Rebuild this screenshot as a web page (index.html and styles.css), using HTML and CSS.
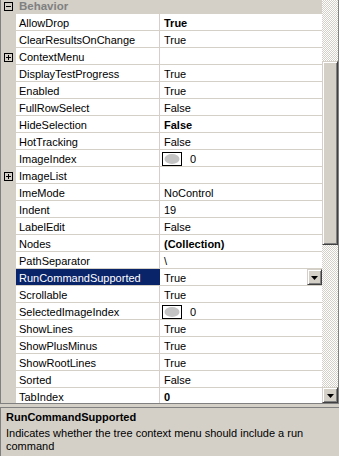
FILE: index.html
```html
<!DOCTYPE html>
<html>
<head>
<meta charset="utf-8">
<link rel="stylesheet" href="styles.css">
</head>
<body>
<div class="pg">
  <div class="grid">
    <div class="rows">
      <div class="cat">
        <div class="gut"><span class="pm"><svg width="9" height="9" viewBox="0 0 9 9"><rect x="0.5" y="0.5" width="8" height="8" fill="none" stroke="#000"/><path d="M2 4.5h5" stroke="#000"/></svg></span></div>
        <div class="cat-label">Behavior</div>
      </div>
      <div class="row"><div class="gut"></div><div class="name">AllowDrop</div><div class="val b">True</div></div>
      <div class="row"><div class="gut"></div><div class="name">ClearResultsOnChange</div><div class="val">True</div></div>
      <div class="row"><div class="gut"><span class="pm"><svg width="9" height="9" viewBox="0 0 9 9"><rect x="0.5" y="0.5" width="8" height="8" fill="none" stroke="#000"/><path d="M2 4.5h5M4.5 2v5" stroke="#000"/></svg></span></div><div class="name">ContextMenu</div><div class="val"></div></div>
      <div class="row"><div class="gut"></div><div class="name">DisplayTestProgress</div><div class="val">True</div></div>
      <div class="row"><div class="gut"></div><div class="name">Enabled</div><div class="val">True</div></div>
      <div class="row"><div class="gut"></div><div class="name">FullRowSelect</div><div class="val">False</div></div>
      <div class="row"><div class="gut"></div><div class="name">HideSelection</div><div class="val b">False</div></div>
      <div class="row"><div class="gut"></div><div class="name">HotTracking</div><div class="val">False</div></div>
      <div class="row"><div class="gut"></div><div class="name">ImageIndex</div><div class="val img"><svg class="ico" width="20" height="14" viewBox="0 0 20 14"><rect x="0.5" y="0.5" width="19" height="13" fill="#fff" stroke="#000"/><ellipse cx="10" cy="7" rx="7.5" ry="5" fill="#c4c4c4"/></svg><span class="num">0</span></div></div>
      <div class="row"><div class="gut"><span class="pm"><svg width="9" height="9" viewBox="0 0 9 9"><rect x="0.5" y="0.5" width="8" height="8" fill="none" stroke="#000"/><path d="M2 4.5h5M4.5 2v5" stroke="#000"/></svg></span></div><div class="name">ImageList</div><div class="val"></div></div>
      <div class="row"><div class="gut"></div><div class="name">ImeMode</div><div class="val">NoControl</div></div>
      <div class="row"><div class="gut"></div><div class="name">Indent</div><div class="val">19</div></div>
      <div class="row"><div class="gut"></div><div class="name">LabelEdit</div><div class="val">False</div></div>
      <div class="row"><div class="gut"></div><div class="name">Nodes</div><div class="val b">(Collection)</div></div>
      <div class="row"><div class="gut"></div><div class="name">PathSeparator</div><div class="val">\</div></div>
      <div class="row"><div class="gut"></div><div class="name sel">RunCommandSupported</div><div class="val edit"><span class="vtext">True</span><span class="btn"><svg width="7" height="4" viewBox="0 0 7 4"><path d="M0 0h7L3.5 4z" fill="#000"/></svg></span></div></div>
      <div class="row"><div class="gut"></div><div class="name">Scrollable</div><div class="val">True</div></div>
      <div class="row"><div class="gut"></div><div class="name">SelectedImageIndex</div><div class="val img"><svg class="ico" width="20" height="14" viewBox="0 0 20 14"><rect x="0.5" y="0.5" width="19" height="13" fill="#fff" stroke="#000"/><ellipse cx="10" cy="7" rx="7.5" ry="5" fill="#c4c4c4"/></svg><span class="num">0</span></div></div>
      <div class="row"><div class="gut"></div><div class="name">ShowLines</div><div class="val">True</div></div>
      <div class="row"><div class="gut"></div><div class="name">ShowPlusMinus</div><div class="val">True</div></div>
      <div class="row"><div class="gut"></div><div class="name">ShowRootLines</div><div class="val">True</div></div>
      <div class="row"><div class="gut"></div><div class="name">Sorted</div><div class="val">False</div></div>
      <div class="row"><div class="gut"></div><div class="name">TabIndex</div><div class="val b">0</div></div>
    </div>
    <div class="vscroll">
      <div class="track t1"></div>
      <div class="thumb"></div>
      <div class="track t2"></div>
      <div class="sbtn"><svg width="7" height="4" viewBox="0 0 7 4"><path d="M0 0h7L3.5 4z" fill="#000"/></svg></div>
    </div>
  </div>
  <div class="desc">
    <div class="desc-title">RunCommandSupported</div>
    <div class="desc-text">Indicates whether the tree context menu should include a run<br>command</div>
  </div>
</div>
</body>
</html>
```
FILE: styles.css
```css
html, body {
  margin: 0;
  padding: 0;
  background: #d4d0c8;
}
body {
  font-family: "Liberation Sans", Arial, sans-serif;
  font-size: 11px;
  color: #000;
}
.pg {
  width: 339px;
  height: 456px;
  overflow: hidden;
  display: flex;
  flex-direction: column;
}
.grid {
  display: flex;
  height: 403px;
  border-left: 1px solid #808080;
  border-right: 1px solid #808080;
  border-bottom: 1px solid #808080;
  flex: none;
}
.rows {
  width: 321px;
  height: 403px;
  overflow: hidden;
  display: flex;
  flex-direction: column;
}
.cat {
  display: flex;
  height: 14px;
  flex: none;
  background: #d4d0c8;
}
.cat .pm {
  margin-top: 2px;
}
.cat-label {
  padding-left: 3px;
  font-weight: bold;
  font-size: 11.5px;
  color: #808080;
  line-height: 12px;
  white-space: nowrap;
}
.row {
  display: flex;
  height: 17px;
  flex: none;
  box-sizing: border-box;
  border-bottom: 1px solid #d4d0c8;
}
.gut {
  width: 15px;
  flex: none;
  background: #d4d0c8;
}
.pm {
  display: block;
  width: 9px;
  height: 9px;
  margin-left: 3px;
  margin-top: 5px;
}
.pm svg {
  display: block;
}
.name {
  width: 144px;
  flex: none;
  background: #fff;
  border-right: 1px solid #d4d0c8;
  padding: 2px 0 0 3px;
  box-sizing: border-box;
  line-height: 14px;
  white-space: nowrap;
  overflow: hidden;
}
.name.sel {
  background: #0a246a;
  border-right-color: #0a246a;
  color: #fff;
}
.val {
  flex: 1;
  background: #fff;
  padding: 2px 0 0 4px;
  line-height: 14px;
  white-space: nowrap;
  overflow: hidden;
}
.val.b {
  font-weight: bold;
}
.val.img {
  display: flex;
  align-items: flex-start;
  padding-left: 2px;
  padding-top: 2px;
}
.ico {
  display: block;
  flex: none;
}
.num {
  margin-left: 8px;
}
.val.edit {
  display: flex;
  padding: 0;
}
.vtext {
  flex: 1;
  padding: 2px 0 0 4px;
}
.btn, .sbtn {
  width: 15px;
  height: 16px;
  box-sizing: border-box;
  flex: none;
  background: #d4d0c8;
  border: 1px solid;
  border-color: #d4d0c8 #404040 #404040 #d4d0c8;
  box-shadow: inset 1px 1px #fff, inset -1px -1px #808080;
  display: flex;
  align-items: center;
  justify-content: center;
}
.btn svg, .sbtn svg {
  display: block;
  margin-top: 1px;
}
.vscroll {
  width: 16px;
  flex: none;
  display: flex;
  flex-direction: column;
}
.track {
  background-color: #fff;
  background-image: conic-gradient(#d4d0c8 0 25%, transparent 0 50%, #d4d0c8 0 75%, transparent 0);
  background-size: 2px 2px;
}
.t1 {
  height: 61px;
  flex: none;
}
.t2 {
  flex: 1;
}
.thumb {
  height: 184px;
  flex: none;
  box-sizing: border-box;
  background: #d4d0c8;
  border: 1px solid;
  border-color: #d4d0c8 #404040 #404040 #d4d0c8;
  box-shadow: inset 1px 1px #fff, inset -1px -1px #808080;
}
.sbtn {
  width: 16px;
}
.desc {
  flex: 1;
  margin-top: 3px;
  border-top: 1px solid #808080;
  border-left: 1px solid #808080;
  background: #d4d0c8;
  padding: 3px 0 0 5px;
  line-height: 13px;
}
.desc-title {
  font-weight: bold;
  white-space: nowrap;
}
.desc-text {
  margin-top: 3px;
  white-space: nowrap;
}
```
